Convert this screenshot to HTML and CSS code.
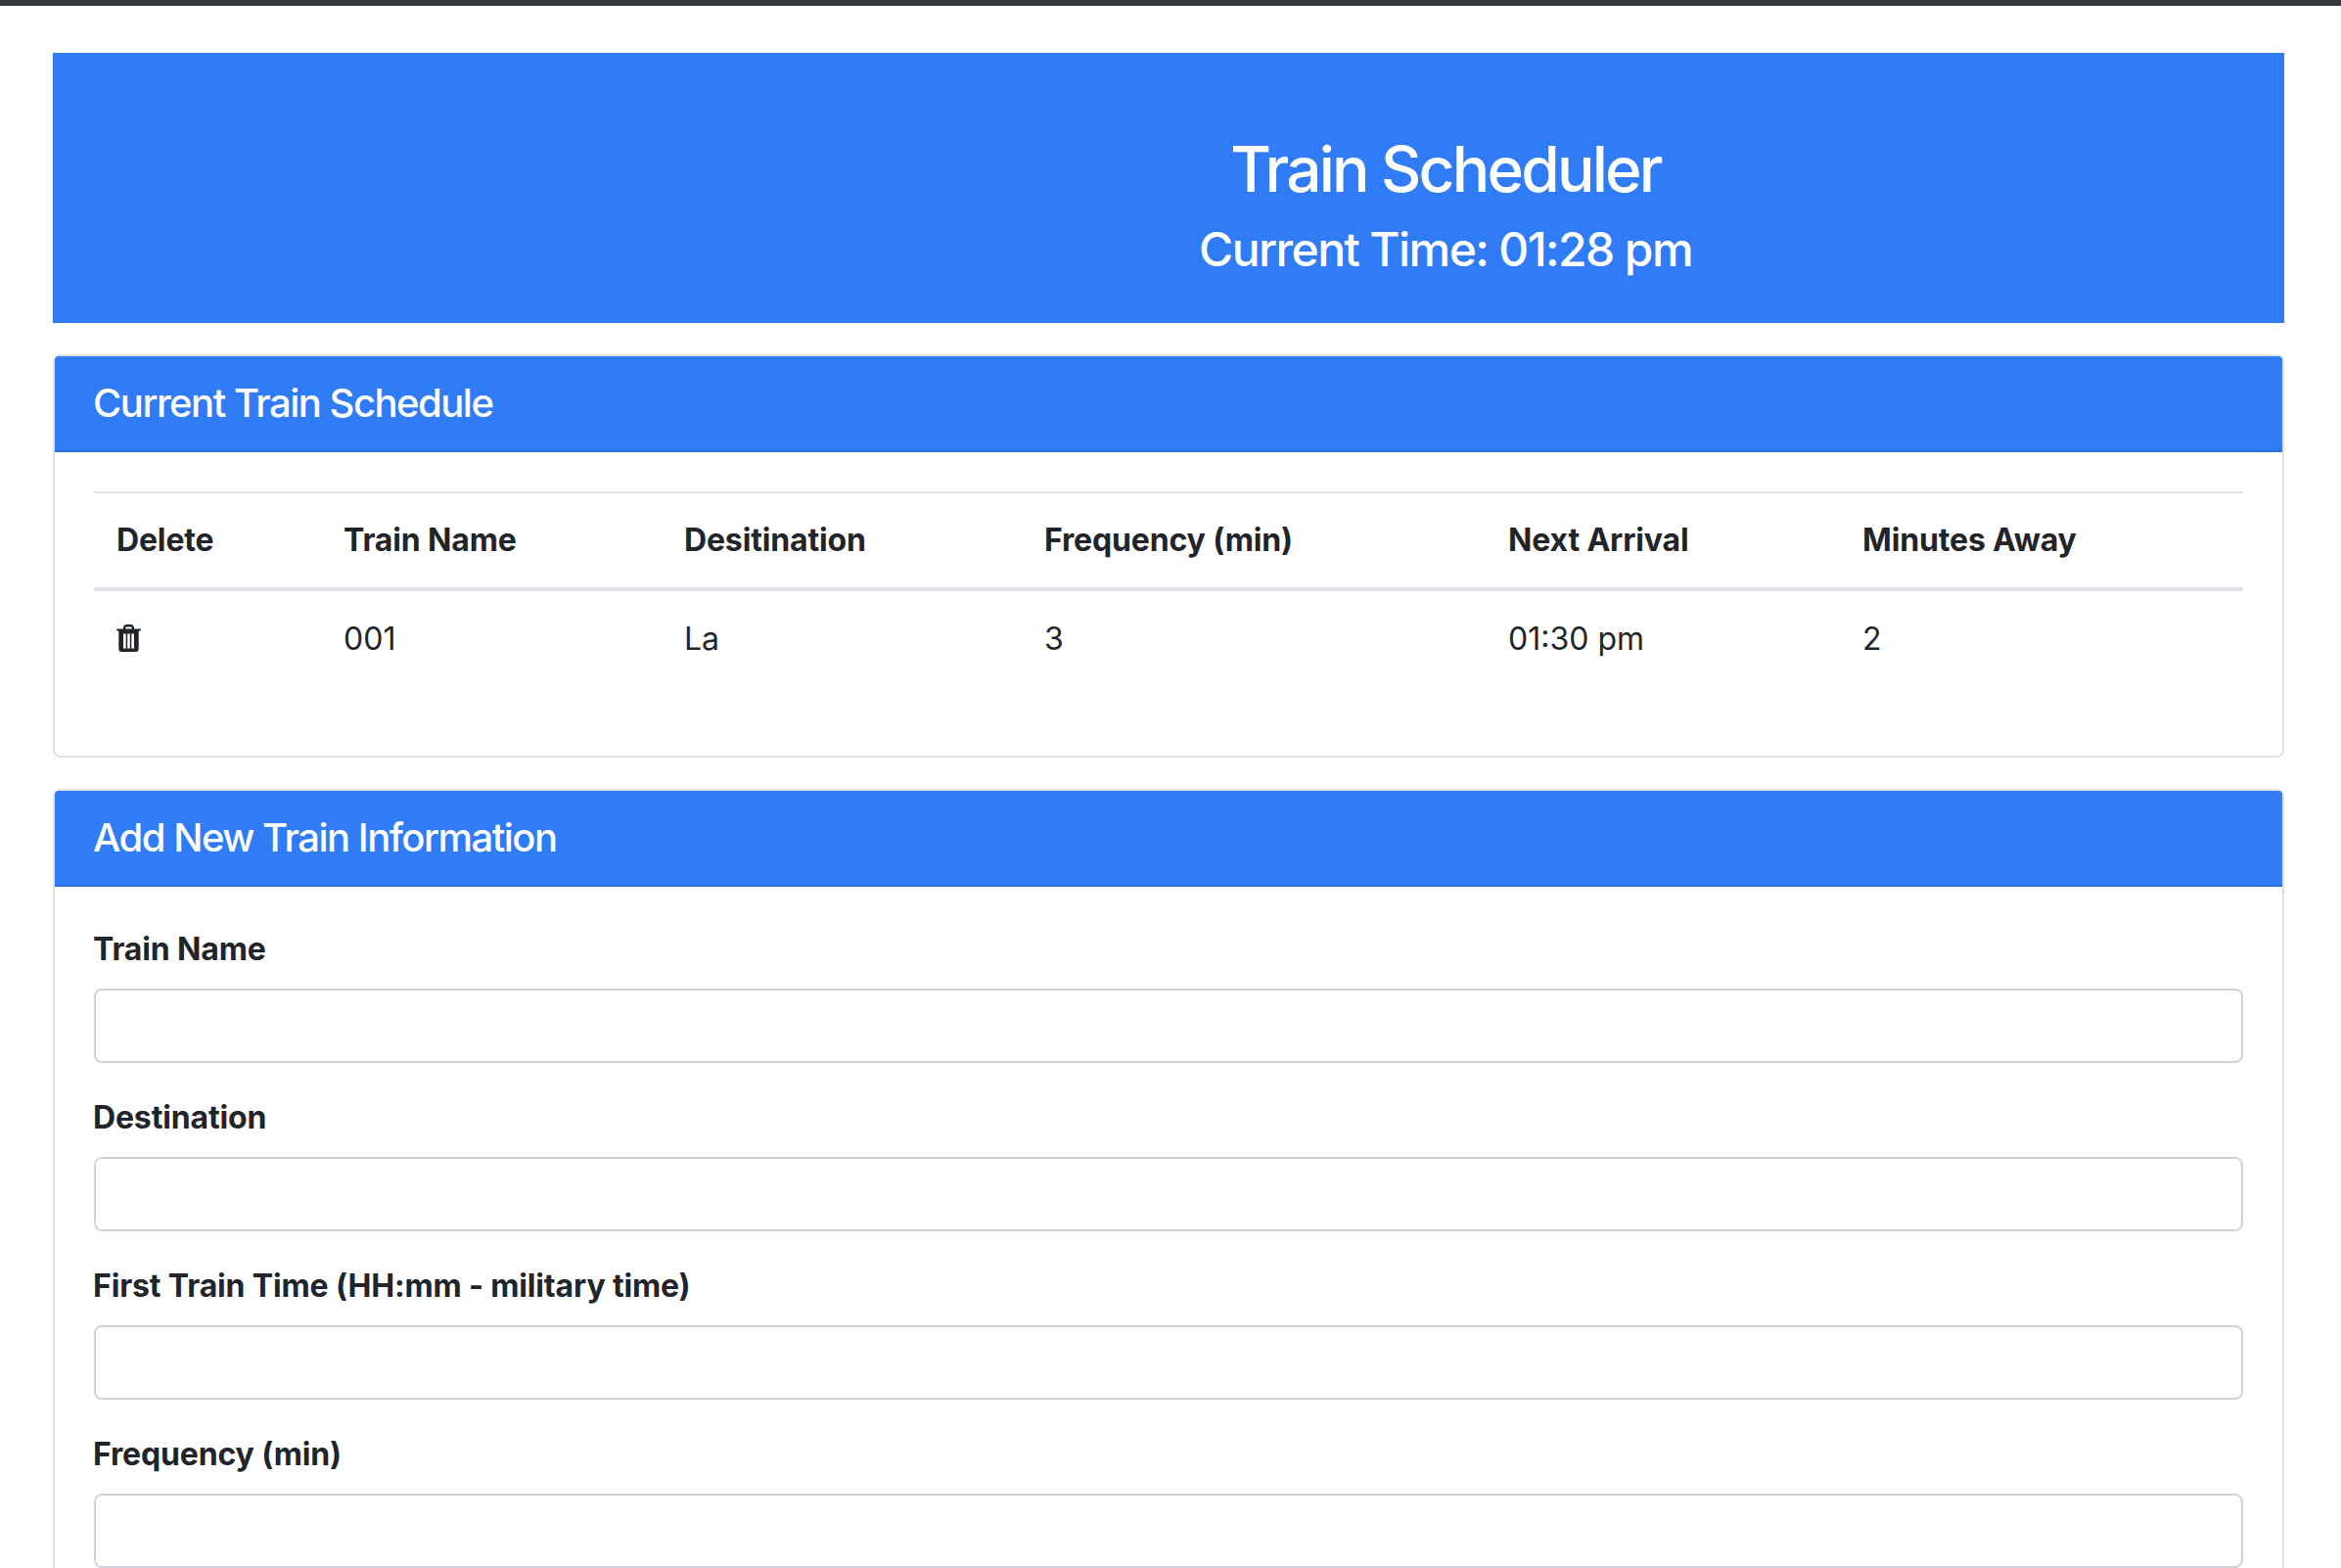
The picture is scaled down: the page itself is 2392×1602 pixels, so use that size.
FILE: index.html
```html
<!DOCTYPE html>
<html lang="en">
<head>
    <meta charset="UTF-8">
    <title>Train Scheduler</title>
    <link rel="stylesheet" href="styles.css">
</head>
<body>
    <div class="topBar"></div>
    <div class="container">
        <div class="jumbotron">
            <h1>Train Scheduler</h1>
            <h2>Current Time: 01:28 pm</h2>
        </div>

        <div class="card">
            <div class="cardHeader">Current Train Schedule</div>
            <div class="cardBody">
                <table class="schedule">
                    <colgroup>
                        <col class="colDelete">
                        <col class="colName">
                        <col class="colDest">
                        <col class="colFreq">
                        <col class="colNext">
                        <col>
                    </colgroup>
                    <thead>
                        <tr>
                            <th>Delete</th>
                            <th>Train Name</th>
                            <th>Desitination</th>
                            <th>Frequency (min)</th>
                            <th>Next Arrival</th>
                            <th>Minutes Away</th>
                        </tr>
                    </thead>
                    <tbody>
                        <tr>
                            <td>
                                <svg class="trash" viewBox="0 0 25 28" aria-label="Delete">
                                    <path fill-rule="evenodd" d="M7 4.6V3.4C7 1.5 8.5 0 10.4 0h4.2C16.500 0 18 1.500 18 3.400V4.600h6c.6 0 1 .4 1 .9s-.4.900-1 .900h-1.300V25c0 1.700-1.300 3-3 3H5.300c-1.700 0-3-1.300-3-3V6.400H1c-.6 0-1-.4-1-.9s.4-.9 1-.9zM9.300 4.600h6.400V3.500c0-.6-.4-1-1-1h-4.400c-.6 0-1 .4-1 1zM7 9.500V24.500h2.700V9.500zM11.200 9.500V24.500h2.600V9.500zM15.300 9.500V24.500H18V9.500z"/>
                                </svg>
                            </td>
                            <td>001</td>
                            <td>La</td>
                            <td>3</td>
                            <td>01:30 pm</td>
                            <td>2</td>
                        </tr>
                    </tbody>
                </table>
            </div>
        </div>

        <div class="card formCard">
            <div class="cardHeader">Add New Train Information</div>
            <div class="cardBody">
                <div class="formGroup">
                    <label for="trainName">Train Name</label>
                    <input type="text" id="trainName">
                </div>
                <div class="formGroup">
                    <label for="destination">Destination</label>
                    <input type="text" id="destination">
                </div>
                <div class="formGroup">
                    <label for="firstTrain">First Train Time (HH:mm - military time)</label>
                    <input type="text" id="firstTrain">
                </div>
                <div class="formGroup">
                    <label for="frequency">Frequency (min)</label>
                    <input type="text" id="frequency">
                </div>
            </div>
        </div>
    </div>
</body>
</html>
```

FILE: styles.css
```css
* {
    box-sizing: border-box;
}

body {
    font-family: 'Inter', 'Liberation Sans', sans-serif;
    font-size: 32px;
    line-height: 48px;
    color: #212529;
    background-color: #fff;
    margin: 0;
}

.topBar {
    height: 6px;
    background-color: #343a40;
}

.container {
    width: 2280px;
    margin-left: 54px;
    padding-top: 48px;
}

.jumbotron {
    height: 276px;
    margin-bottom: 32px;
    padding: 80px 0 0 566px;
    background-color: #2f7cf6;
    color: #fff;
    text-align: center;
}

.jumbotron h1 {
    margin: 0 0 15px;
    font-size: 64px;
    font-weight: 500;
    line-height: 77px;
    letter-spacing: -2.8px;
}

.jumbotron h2 {
    margin: 0;
    font-size: 48px;
    font-weight: 500;
    line-height: 58px;
    letter-spacing: -1.6px;
}

.card {
    margin-bottom: 32px;
    border: 2px solid #dfdfdf;
    border-radius: 8px;
}

.formCard {
    margin-bottom: 0;
    border-bottom: 0;
    border-radius: 8px 8px 0 0;
}

.cardHeader {
    padding: 24px 40px 24px 39px;
    background-color: #2f7cf6;
    border-bottom: 2px solid #2a6fdd;
    border-radius: 4px 4px 0 0;
    color: #fff;
    font-size: 40px;
    font-weight: 500;
    line-height: 48px;
    letter-spacing: -1.5px;
}

.cardBody {
    padding: 40px;
}

.formCard .cardBody {
    padding-bottom: 0;
}

.schedule {
    width: 100%;
    margin-bottom: 32px;
    border-collapse: separate;
    border-spacing: 0;
    table-layout: fixed;
}

.colDelete {
    width: 231px;
}

.colName {
    width: 348px;
}

.colDest {
    width: 368px;
}

.colFreq {
    width: 474px;
}

.colNext {
    width: 362px;
}

.schedule th,
.schedule td {
    padding: 24px;
    text-align: left;
}

.schedule td {
    padding: 25px 24px 23px;
    vertical-align: top;
}

.schedule th {
    font-weight: 650;
    letter-spacing: -0.15px;
    border-top: 2px solid #dee2e6;
    border-bottom: 4px solid #dee2e6;
}

.schedule th:first-child {
    padding-left: 23px;
}

.trash {
    display: block;
    width: 25px;
    height: 28px;
    margin: 9px 0 0 -1px;
    fill: #212529;
}

.formGroup {
    margin-bottom: 32px;
}

.formGroup:last-child {
    margin-bottom: 0;
}

label {
    display: block;
    margin: 0 0 16px -1px;
    font-weight: 650;
    letter-spacing: -0.15px;
}

input {
    display: block;
    width: 100%;
    height: 76px;
    padding: 12px 24px;
    border: 2px solid #ced4da;
    border-radius: 8px;
    background-color: #fff;
}
```
